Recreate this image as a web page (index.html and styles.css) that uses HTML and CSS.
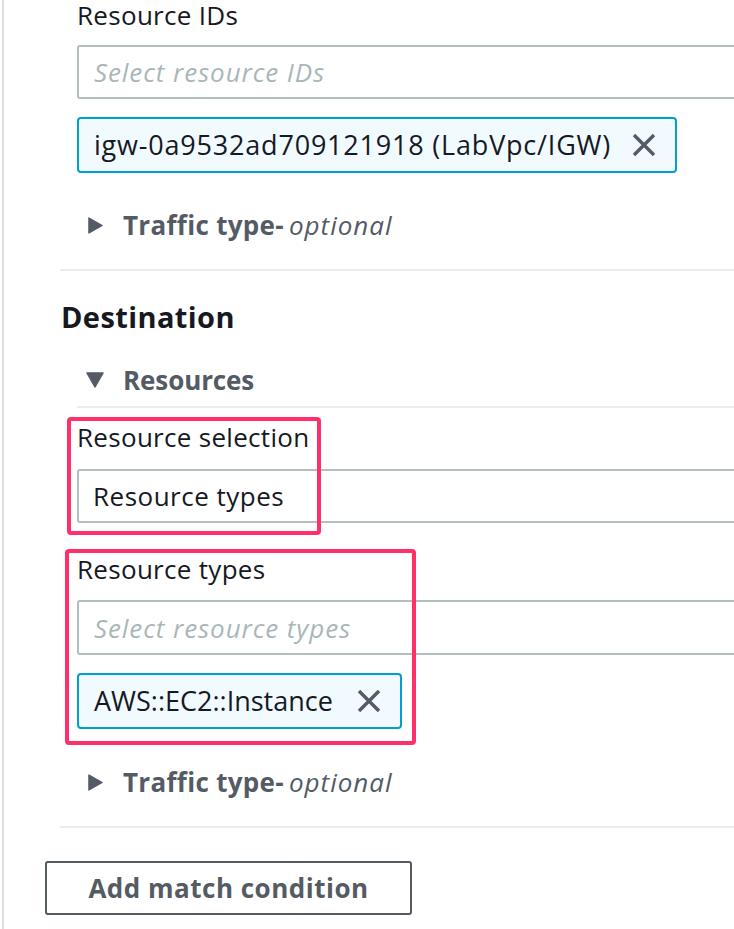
FILE: index.html
```html
<!DOCTYPE html>
<html lang="en">
<head>
<meta charset="utf-8">
<title>Match condition</title>
<link rel="stylesheet" href="styles.css">
</head>
<body>
<div class="page">
  <div class="field field-ids">
    <label class="field-label" for="res-ids">Resource IDs</label>
    <input id="res-ids" class="text-input" type="text" placeholder="Select resource IDs">
    <div class="token token-wide">
      <span class="token-text token-text-id">igw-0a9532ad709121918 (LabVpc/IGW)</span>
      <svg class="token-x" viewBox="0 0 26 26" aria-hidden="true"><path d="M3 3 L23 23 M23 3 L3 23"/></svg>
    </div>
  </div>
  <div class="expander expander-traffic">
    <svg class="caret-right" viewBox="0 0 16 18" aria-hidden="true"><path d="M1 1 L15 9 L1 17 Z"/></svg>
    <span class="exp-title">Traffic type-</span><span class="exp-opt">optional</span>
  </div>
  <div class="divider divider-wide"></div>

  <h2 class="section-title">Destination</h2>
  <div class="expander expander-open">
    <svg class="caret-down" viewBox="0 0 18 16" aria-hidden="true"><path d="M1 1 L17 1 L9 15 Z"/></svg>
    <span class="exp-title exp-title-res">Resources</span>
  </div>
  <div class="divider divider-inner"></div>

  <div class="field field-sel">
    <span class="highlight highlight-sel"></span>
    <label class="field-label" for="res-sel">Resource selection</label>
    <div class="text-input select-input" id="res-sel">Resource types</div>
  </div>

  <div class="field field-types">
    <span class="highlight highlight-types"></span>
    <label class="field-label" for="res-types">Resource types</label>
    <input id="res-types" class="text-input" type="text" placeholder="Select resource types">
    <div class="token token-narrow">
      <span class="token-text">AWS::EC2::Instance</span>
      <svg class="token-x" viewBox="0 0 26 26" aria-hidden="true"><path d="M3 3 L23 23 M23 3 L3 23"/></svg>
    </div>
  </div>
  <div class="expander expander-traffic2">
    <svg class="caret-right" viewBox="0 0 16 18" aria-hidden="true"><path d="M1 1 L15 9 L1 17 Z"/></svg>
    <span class="exp-title">Traffic type-</span><span class="exp-opt">optional</span>
  </div>
  <div class="divider divider-wide divider-last"></div>

  <button class="btn-add" type="button">Add match condition</button>
</div>
</body>
</html>
```

FILE: styles.css
```css
html, body {
  margin: 0;
  padding: 0;
  background: #ffffff;
  overflow: hidden;
}

body {
  font-family: "Open Sans", "Noto Sans", sans-serif;
  color: #16191f;
  font-size: 26px;
}

.page {
  margin-left: 2px;
  border-left: 2px solid #dadfdf;
  width: 780px;
  min-height: 929px;
  box-sizing: border-box;
  display: flex;
  flex-direction: column;
  align-items: flex-start;
}

.field {
  position: relative;
  margin-left: 73px;
  width: 700px;
  display: flex;
  flex-direction: column;
  align-items: flex-start;
}

.field-label {
  display: block;
  line-height: 30px;
  height: 30px;
  font-size: 26px;
  letter-spacing: 0.3px;
  color: #16191f;
  white-space: nowrap;
}

.text-input {
  box-sizing: border-box;
  width: 700px;
  height: 54px;
  border: 2px solid #b3bebf;
  border-radius: 3px;
  padding: 0 0 0 15px;
  font-family: "Open Sans", "Noto Sans", sans-serif;
  font-size: 26px;
  letter-spacing: 0.9px;
  color: #16191f;
  background: #ffffff;
  outline: none;
  margin: 15px 0 0 0;
}

.text-input::placeholder {
  color: #aab7b8;
  font-style: italic;
}

.select-input {
  display: flex;
  align-items: center;
  margin-top: 17px;
  letter-spacing: 0.5px;
  padding-left: 14px;
}

.field-types .text-input {
  margin-top: 16px;
  height: 55px;
}

.token {
  box-sizing: border-box;
  display: flex;
  align-items: center;
  height: 56px;
  margin-top: 18px;
  padding: 0 18px 0 15px;
  background: #f1faff;
  border: 2px solid #00a1c9;
  border-radius: 4px;
}

.token-wide { width: 600px; }
.token-narrow { width: 325px; }

.token-text {
  flex: 1;
  white-space: nowrap;
  color: #16191f;
  font-size: 27px;
  line-height: 32px;
}

.token-text-id {
  letter-spacing: 0.8px;
}

.token-x {
  width: 26px;
  height: 26px;
  flex: none;
}

.token-x path {
  stroke: #545b64;
  stroke-width: 3.4;
  fill: none;
}

.expander {
  display: flex;
  align-items: center;
  height: 30px;
  line-height: 30px;
  color: #545b64;
  white-space: nowrap;
}

.expander-traffic {
  margin: 37px 0 0 84px;
}

.expander-traffic2 {
  margin: 38px 0 0 84px;
}

.expander-open {
  margin: 31px 0 0 82px;
}

.caret-right {
  width: 15px;
  height: 17px;
  margin-right: 20px;
}

.caret-down {
  width: 18px;
  height: 16px;
  margin-right: 19px;
}

.caret-right path,
.caret-down path {
  fill: #545b64;
  stroke: #545b64;
  stroke-width: 1.5;
  stroke-linejoin: round;
}

.exp-title {
  font-weight: 700;
  font-size: 26px;
  letter-spacing: 0.3px;
}

.exp-title-res {
  letter-spacing: -0.1px;
}

.exp-opt {
  font-style: italic;
  font-size: 26px;
  letter-spacing: 1px;
  margin-left: 5px;
}

.divider {
  height: 2px;
  background: #eaeded;
}

.divider-wide {
  margin: 29px 0 0 56px;
  width: 720px;
}

.divider-inner {
  margin: 11px 0 0 73px;
  width: 700px;
}

.section-title {
  margin: 29px 0 0 57px;
  font-size: 29px;
  line-height: 34px;
  font-weight: 700;
  letter-spacing: 0.4px;
  color: #16191f;
}

.field-sel {
  margin-top: 14px;
}

.field-types {
  margin-top: 31px;
}

.highlight {
  position: absolute;
  border: 4px solid #ff3069;
  border-radius: 4px;
  pointer-events: none;
  box-sizing: border-box;
}

.highlight-sel {
  left: -10px;
  top: -5px;
  width: 254px;
  height: 118px;
}

.highlight-types {
  left: -12px;
  top: -5px;
  width: 351px;
  height: 196px;
}

.btn-add {
  margin: 33px 0 0 41px;
  box-sizing: border-box;
  width: 367px;
  height: 54px;
  background: #ffffff;
  border: 2px solid #545b64;
  border-radius: 3px;
  font-family: "Open Sans", "Noto Sans", sans-serif;
  font-size: 26px;
  font-weight: 700;
  color: #545b64;
  padding: 0;
  letter-spacing: 0.5px;
}
```
